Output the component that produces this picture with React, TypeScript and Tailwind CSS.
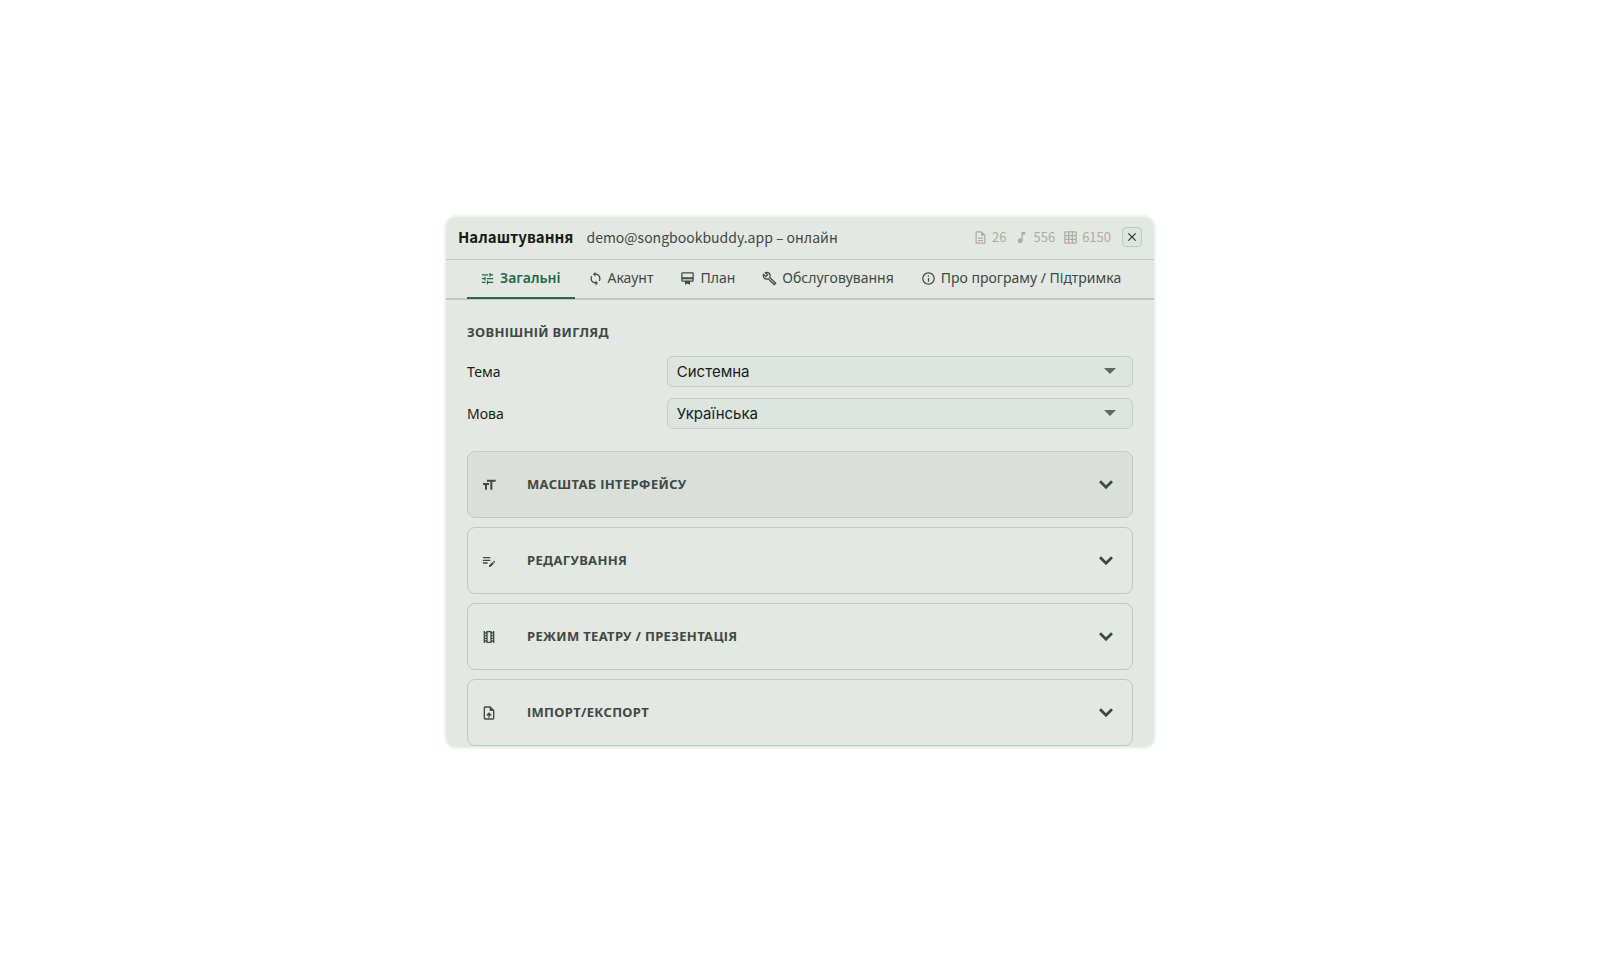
import { useState } from 'react';
import clsx from 'clsx';
import {
  MdCardMembership,
  MdClose,
  MdEditNote,
  MdFormatSize,
  MdGridOn,
  MdInfoOutline,
  MdMusicNote,
  MdOutlineBuild,
  MdOutlineDescription,
  MdOutlineTheaters,
  MdOutlineUploadFile,
  MdSync,
  MdTune,
} from 'react-icons/md';

const STATS = [
  { label: 'Пісенники', value: 26, icon: MdOutlineDescription },
  { label: 'Пісні', value: 556, icon: MdMusicNote },
  { label: 'Акорди', value: 6150, icon: MdGridOn },
];

const TABS = [
  { id: 'general', label: 'Загальні', icon: MdTune },
  { id: 'account', label: 'Акаунт', icon: MdSync },
  { id: 'plan', label: 'План', icon: MdCardMembership },
  { id: 'maintenance', label: 'Обслуговування', icon: MdOutlineBuild },
  { id: 'about', label: 'Про програму / Підтримка', icon: MdInfoOutline },
];

const SELECTS = [
  { id: 'theme', label: 'Тема', options: ['Системна', 'Світла', 'Темна'] },
  { id: 'language', label: 'Мова', options: ['Українська', 'English', 'Deutsch'] },
];

const SECTIONS = [
  { title: 'Масштаб інтерфейсу', icon: MdFormatSize },
  { title: 'Редагування', icon: MdEditNote },
  { title: 'Режим театру / Презентація', icon: MdOutlineTheaters },
  { title: 'Імпорт/Експорт', icon: MdOutlineUploadFile },
];

function Header() {
  return (
    <header className="flex items-center gap-[13px] border-b border-[#c1cac2] px-3 pt-2.5 pb-3 font-['Noto_Sans_CJK_JP','Noto_Sans',sans-serif]">
      <h1 className="text-[15px] leading-5 font-semibold text-[#171d19]">Налаштування</h1>
      <p className="text-sm leading-5 text-[#404943]">demo@songbookbuddy.app – онлайн</p>
      <ul className="ml-auto flex items-center gap-2 text-[13px] leading-5 text-[#b0aba7]">
        {STATS.map((stat) => (
          <li key={stat.label} title={stat.label} className="flex items-center gap-1">
            <stat.icon size={15} />
            {stat.value}
          </li>
        ))}
      </ul>
      <button
        type="button"
        aria-label="Закрити"
        className="-ml-0.5 flex size-5 items-center justify-center rounded border border-[#bfc9c1] bg-[#dde5de] text-[#2a322d]"
      >
        <MdClose size={14} />
      </button>
    </header>
  );
}

function Tabs() {
  const [active, setActive] = useState('general');

  return (
    <nav className="flex border-b-2 border-[#bfc9c1] px-[21px]" role="tablist">
      {TABS.map((tab) => {
        const isActive = tab.id === active;
        return (
          <button
            key={tab.id}
            type="button"
            role="tab"
            aria-selected={isActive}
            onClick={() => setActive(tab.id)}
            className={clsx(
              '-mb-px flex items-center gap-[5px] border-b-2 pt-2 pr-3.5 pb-[9px] pl-[13px] text-sm leading-5 whitespace-nowrap',
              isActive ? 'border-[#226a4c] font-semibold text-[#226a4c]' : 'border-transparent text-[#404943]'
            )}
          >
            <tab.icon size={15} className="shrink-0" />
            {tab.label}
          </button>
        );
      })}
    </nav>
  );
}

function SelectRow({ id, label, options }: { id: string; label: string; options: string[] }) {
  return (
    <div className="grid grid-cols-[3fr_7fr] items-center">
      <label htmlFor={id} className="text-sm leading-5 text-[#171d19]">
        {label}
      </label>
      <div className="relative">
        <select
          id={id}
          className="block h-[31px] w-full appearance-none rounded-md border border-[#c6cdc7] bg-[#dde5de] px-[9px] font-['Inter',sans-serif] text-[15px] leading-5 text-[#171d19]"
        >
          {options.map((option) => (
            <option key={option}>{option}</option>
          ))}
        </select>
        <svg viewBox="0 0 12 6" className="pointer-events-none absolute top-3 right-[17px] h-1.5 w-3 fill-[#626663]">
          <path d="M0 0h12L6 6z" />
        </svg>
      </div>
    </div>
  );
}

function Section({ section, highlighted }: { section: (typeof SECTIONS)[number]; highlighted: boolean }) {
  return (
    <button
      type="button"
      aria-expanded={false}
      className={clsx(
        'flex w-full items-center rounded-lg border border-[#c1c9c2] py-[23px] pr-[19px] pl-[13px] text-left text-[#404943]',
        highlighted && 'bg-[#dadfda]'
      )}
    >
      <section.icon size={16} className="shrink-0" />
      <span className="flex-1 pl-[30px] text-[13px] leading-[19px] font-bold tracking-wide uppercase">
        {section.title}
      </span>
      <svg viewBox="0 0 14 9" className="h-[9px] w-3.5 fill-none stroke-current stroke-[2.8]">
        <path d="M1 1.2l6 6 6-6" />
      </svg>
    </button>
  );
}

export default function App() {
  return (
    <div className="flex min-h-screen items-center justify-center bg-white font-['Noto_Sans',sans-serif]">
      <main className="flex aspect-[4/3] w-full max-w-[712px] flex-col overflow-hidden rounded-xl border-2 border-[#eef4ef] bg-[#e3e8e2]">
        <Header />
        <Tabs />
        <div className="flex-1 px-[21px] pt-[22px]">
          <h2 className="text-[13px] leading-5 font-bold tracking-wide text-[#404943] uppercase">Зовнішній вигляд</h2>
          <div className="mt-3.5 flex flex-col gap-[11px]">
            {SELECTS.map((select) => (
              <SelectRow key={select.id} {...select} />
            ))}
          </div>
          <div className="mt-[22px] flex flex-col gap-[9px]">
            {SECTIONS.map((section, i) => (
              <Section key={section.title} section={section} highlighted={i === 0} />
            ))}
          </div>
        </div>
      </main>
    </div>
  );
}
